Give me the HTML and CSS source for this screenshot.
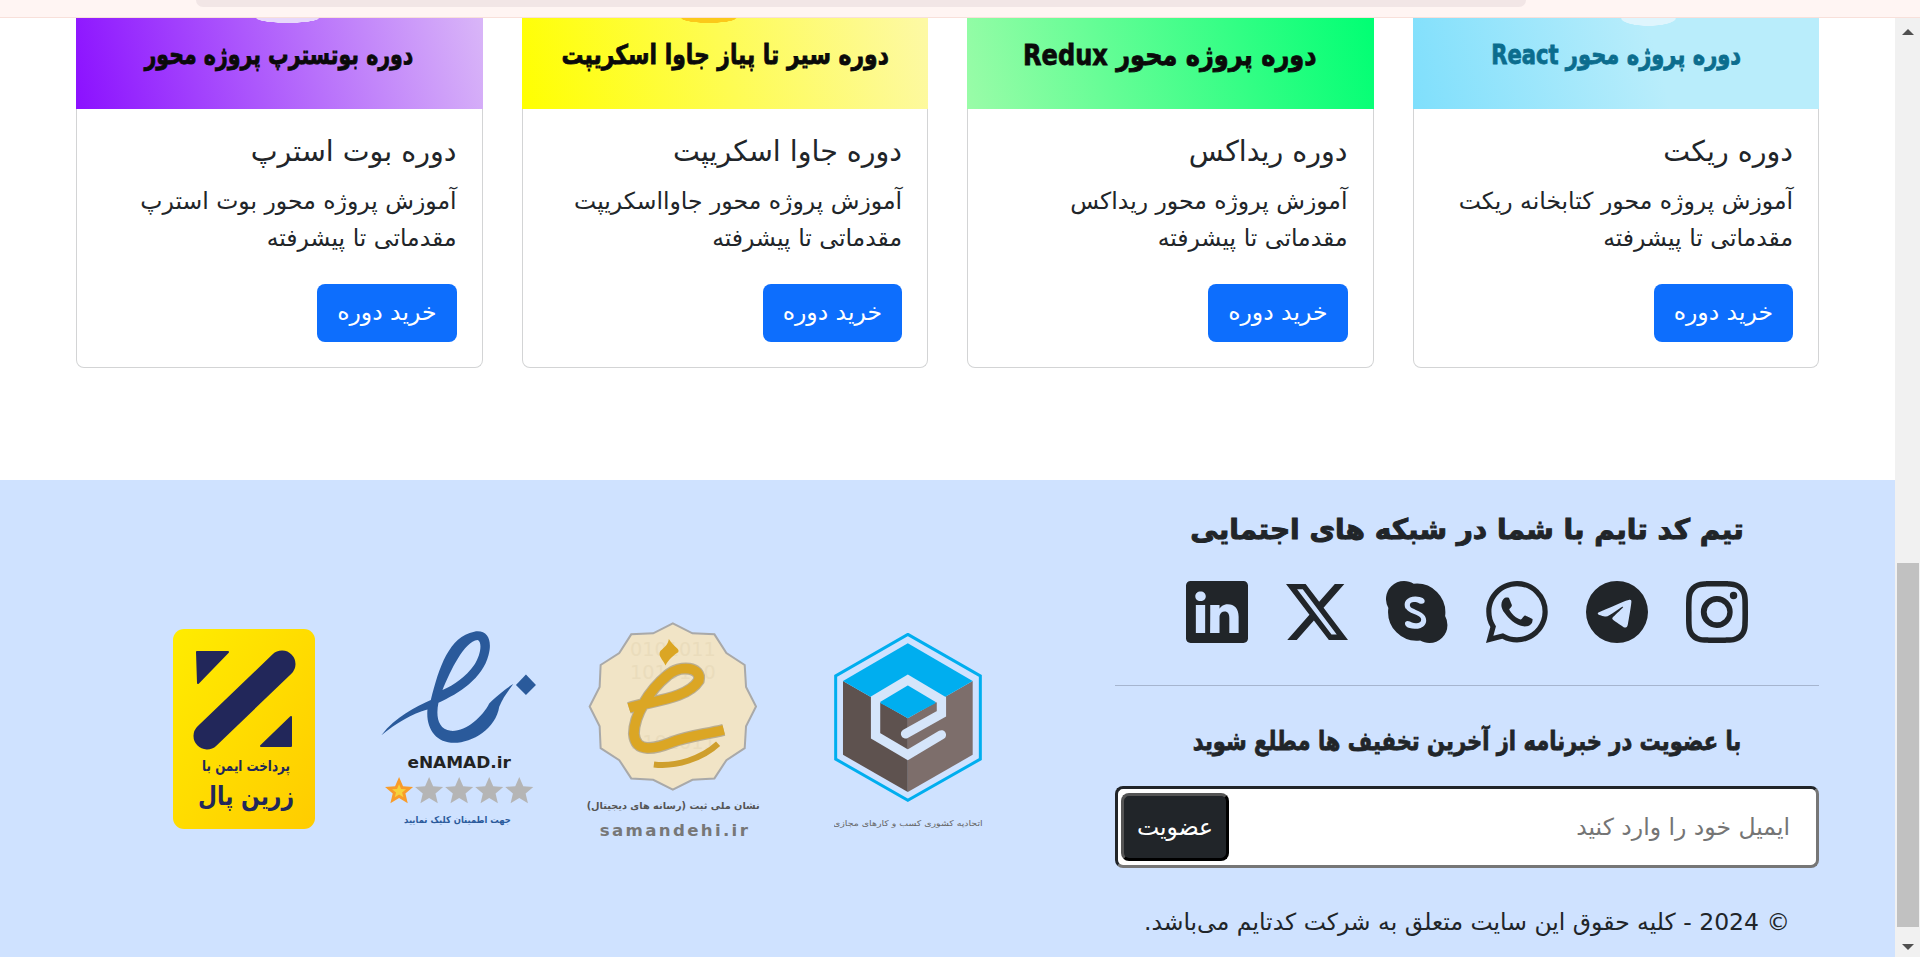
FILE: index.html
```html
<!DOCTYPE html>
<html lang="fa" dir="rtl">
<head>
    <meta charset="UTF-8">
    <meta name="viewport" content="width=device-width, initial-scale=1.0">
    <title>کدتایم</title>
    <link rel="stylesheet" href="styles.css">
</head>
<body>
    <div class="top-strip"><div class="top-pill"></div></div>

    <div class="viewport" dir="ltr">
        <main class="page" dir="rtl">
            <section class="courses">
                <article class="card">
                    <div class="banner banner-react"><span class="banner-text banner-text-react">دوره پروژه محور React</span></div>
                    <div class="card-body">
                        <h5 class="card-title">دوره ریکت</h5>
                        <p class="card-text">آموزش پروژه محور کتابخانه ریکت مقدماتی تا پیشرفته</p>
                        <a class="btn-buy">خرید دوره</a>
                    </div>
                </article>
                <article class="card">
                    <div class="banner banner-redux"><span class="banner-text banner-text-redux">دوره پروژه محور Redux</span></div>
                    <div class="card-body">
                        <h5 class="card-title">دوره ریداکس</h5>
                        <p class="card-text">آموزش پروژه محور ریداکس مقدماتی تا پیشرفته</p>
                        <a class="btn-buy">خرید دوره</a>
                    </div>
                </article>
                <article class="card">
                    <div class="banner banner-js"><span class="banner-text banner-text-js">دوره سیر تا پیاز جاوا اسکریپت</span></div>
                    <div class="card-body">
                        <h5 class="card-title">دوره جاوا اسکریپت</h5>
                        <p class="card-text">آموزش پروژه محور جاوااسکریپت مقدماتی تا پیشرفته</p>
                        <a class="btn-buy">خرید دوره</a>
                    </div>
                </article>
                <article class="card">
                    <div class="banner banner-bootstrap"><span class="banner-text banner-text-bootstrap">دوره بوتسترپ پروژه محور</span></div>
                    <div class="card-body">
                        <h5 class="card-title">دوره بوت استرپ</h5>
                        <p class="card-text">آموزش پروژه محور بوت استرپ مقدماتی تا پیشرفته</p>
                        <a class="btn-buy">خرید دوره</a>
                    </div>
                </article>
            </section>

            <footer class="footer">
                <div class="footer-main">
                    <h4 class="social-title">تیم کد تایم با شما در شبکه های اجتمایی</h4>
                    <div class="social-icons">
                        <svg class="social-icon" viewBox="0 0 16 16"><path d="M8 0C5.829 0 5.556.01 4.703.048 3.85.088 3.269.222 2.76.42a3.9 3.9 0 0 0-1.417.923A3.9 3.9 0 0 0 .42 2.76C.222 3.268.087 3.85.048 4.7.01 5.555 0 5.827 0 8.001c0 2.172.01 2.444.048 3.297.04.852.174 1.433.372 1.942.205.526.478.972.923 1.417.444.445.89.719 1.416.923.51.198 1.09.333 1.942.372C5.555 15.99 5.827 16 8 16s2.444-.01 3.298-.048c.851-.04 1.434-.174 1.943-.372a3.9 3.9 0 0 0 1.416-.923c.445-.445.718-.891.923-1.417.197-.509.332-1.09.372-1.942C15.99 10.445 16 10.173 16 8s-.01-2.445-.048-3.299c-.04-.851-.175-1.433-.372-1.941a3.9 3.9 0 0 0-.923-1.417A3.9 3.9 0 0 0 13.24.42c-.51-.198-1.092-.333-1.943-.372C10.443.01 10.172 0 7.998 0zm-.717 1.442h.718c2.136 0 2.389.007 3.232.046.78.035 1.204.166 1.486.275.373.145.64.319.92.599s.453.546.598.92c.11.281.24.705.275 1.485.039.843.047 1.096.047 3.231s-.008 2.389-.047 3.232c-.035.78-.166 1.203-.275 1.485a2.5 2.5 0 0 1-.599.919c-.28.28-.546.453-.92.598-.28.11-.704.24-1.485.276-.843.038-1.096.047-3.232.047s-2.39-.009-3.233-.047c-.78-.036-1.203-.166-1.485-.276a2.5 2.5 0 0 1-.92-.598 2.5 2.5 0 0 1-.6-.92c-.109-.281-.24-.705-.275-1.485-.038-.843-.046-1.096-.046-3.233s.008-2.388.046-3.231c.036-.78.166-1.204.276-1.486.145-.373.319-.64.599-.92s.546-.453.92-.598c.282-.11.705-.24 1.485-.276.738-.034 1.024-.044 2.515-.045zm4.988 1.328a.96.96 0 1 0 0 1.92.96.96 0 0 0 0-1.92m-4.27 1.122a4.109 4.109 0 1 0 0 8.217 4.109 4.109 0 0 0 0-8.217m0 1.441a2.667 2.667 0 1 1 0 5.334 2.667 2.667 0 0 1 0-5.334"/></svg>
                        <svg class="social-icon" viewBox="0 0 16 16"><path d="M16 8A8 8 0 1 1 0 8a8 8 0 0 1 16 0M8.287 5.906q-1.168.486-4.666 2.01-.567.225-.595.442c-.03.243.275.339.69.47l.175.055c.408.133.958.288 1.243.294q.39.01.868-.32 3.269-2.206 3.374-2.23c.05-.012.12-.026.166.016s.042.12.037.141c-.03.129-1.227 1.241-1.846 1.817-.193.18-.33.307-.358.336a8 8 0 0 1-.188.186c-.38.366-.664.64.015 1.088.327.216.589.393.85.571.284.194.568.387.936.629q.14.092.27.187c.331.236.63.448.997.414.214-.02.435-.22.547-.82.265-1.417.786-4.486.906-5.751a1.4 1.4 0 0 0-.013-.315.34.34 0 0 0-.114-.217.53.53 0 0 0-.31-.093c-.3.005-.763.166-2.984 1.09"/></svg>
                        <svg class="social-icon" viewBox="0 0 16 16"><path d="M13.601 2.326A7.85 7.85 0 0 0 7.994 0C3.627 0 .068 3.558.064 7.926c0 1.399.366 2.76 1.057 3.965L0 16l4.204-1.102a7.9 7.9 0 0 0 3.79.965h.004c4.368 0 7.926-3.558 7.93-7.93A7.9 7.9 0 0 0 13.6 2.326zM7.994 14.521a6.6 6.6 0 0 1-3.356-.92l-.24-.144-2.494.654.666-2.433-.156-.251a6.56 6.56 0 0 1-1.007-3.505c0-3.626 2.957-6.584 6.591-6.584a6.56 6.56 0 0 1 4.66 1.931 6.56 6.56 0 0 1 1.928 4.66c-.004 3.639-2.961 6.592-6.592 6.592m3.615-4.934c-.197-.099-1.17-.578-1.353-.646-.182-.065-.315-.099-.445.099-.133.197-.513.646-.627.775-.114.133-.232.148-.43.05-.197-.1-.836-.308-1.592-.985-.59-.525-.985-1.175-1.103-1.372-.114-.198-.011-.304.088-.403.087-.088.197-.232.296-.346.1-.114.133-.198.198-.33.065-.134.034-.248-.015-.347-.05-.099-.445-1.076-.612-1.47-.16-.389-.323-.335-.445-.34-.114-.007-.247-.007-.38-.007a.73.73 0 0 0-.529.247c-.182.198-.691.677-.691 1.654s.71 1.916.81 2.049c.098.133 1.394 2.132 3.383 2.992.47.205.84.326 1.129.418.475.152.904.129 1.246.08.38-.058 1.171-.48 1.338-.943.164-.464.164-.86.114-.943-.049-.084-.182-.133-.38-.232"/></svg>
                        <svg class="social-icon" viewBox="0 0 16 16"><path d="M4.671 0c.88 0 1.733.247 2.468.702a7.42 7.42 0 0 1 6.02 2.118 7.37 7.37 0 0 1 2.167 5.215q0 .517-.072 1.026a4.66 4.66 0 0 1 .6 2.281 4.64 4.64 0 0 1-1.37 3.294A4.67 4.67 0 0 1 11.18 16c-.84 0-1.658-.226-2.37-.644a7.42 7.42 0 0 1-6.114-2.107A7.37 7.37 0 0 1 .529 8.035q0-.545.08-1.081a4.644 4.644 0 0 1 .76-5.59A4.68 4.68 0 0 1 4.67 0zm.447 7.01c.18.309.43.572.729.769a7 7 0 0 0 1.257.653q.737.308 1.145.523c.229.112.437.264.615.448.135.142.21.331.21.528a.87.87 0 0 1-.335.723c-.291.196-.64.289-.99.264a2.6 2.6 0 0 1-1.048-.206 11 11 0 0 1-.532-.253 1.3 1.3 0 0 0-.587-.15.72.72 0 0 0-.501.176.65.65 0 0 0-.195.498c.01.258.126.499.32.669.248.23.55.398.877.49.441.134.9.199 1.36.192.51.009 1.02-.071 1.504-.236.408-.143.766-.396 1.035-.733.255-.335.39-.747.38-1.168a2.1 2.1 0 0 0-.331-1.192 2.8 2.8 0 0 0-.892-.836 10 10 0 0 0-1.435-.692 11 11 0 0 1-.923-.421 1.6 1.6 0 0 1-.447-.35.75.75 0 0 1-.18-.501.7.7 0 0 1 .3-.566c.232-.162.51-.24.792-.224.239-.003.476.03.704.1.231.08.46.167.686.263.186.07.383.11.582.119a.76.76 0 0 0 .57-.197.69.69 0 0 0 .191-.5.72.72 0 0 0-.12-.396 1.4 1.4 0 0 0-.397-.39 2.4 2.4 0 0 0-.753-.306 4.6 4.6 0 0 0-1.16-.123 3.8 3.8 0 0 0-1.387.241 2.2 2.2 0 0 0-.976.736c-.246.332-.375.735-.366 1.148-.015.4.08.794.275 1.143z"/></svg>
                        <svg class="social-icon" viewBox="0 0 16 16"><path d="M12.6.75h2.454l-5.36 6.142L16 15.25h-4.937l-3.867-5.07-4.425 5.07H.316l5.733-6.57L0 .75h5.063l3.495 4.633L12.601.75Zm-.86 13.028h1.36L4.323 2.145H2.865z"/></svg>
                        <svg class="social-icon" viewBox="0 0 16 16"><path d="M0 1.146C0 .513.526 0 1.175 0h13.65C15.474 0 16 .513 16 1.146v13.708c0 .633-.526 1.146-1.175 1.146H1.175C.526 16 0 15.487 0 14.854zm4.943 12.248V6.169H2.542v7.225zm-1.2-8.212c.837 0 1.358-.554 1.358-1.248-.015-.709-.52-1.248-1.342-1.248S2.4 3.226 2.4 3.934c0 .694.521 1.248 1.327 1.248zm4.908 8.212V9.359c0-.216.016-.432.08-.586.173-.431.568-.878 1.232-.878.869 0 1.216.662 1.216 1.634v3.865h2.401V9.25c0-2.22-1.184-3.252-2.764-3.252-1.274 0-1.845.7-2.165 1.193v.025h-.016l.016-.025V6.169h-2.4c.03.678 0 7.225 0 7.225z"/></svg>
                    </div>
                    <hr class="divider">
                    <h5 class="news-title">با عضویت در خبرنامه از آخرین تخفیف ها مطلع شوید</h5>
                    <form class="news-form">
                        <input class="news-input" type="email" placeholder="ایمیل خود را وارد کنید">
                        <button class="news-btn" type="button">عضویت</button>
                    </form>
                    <p class="copyright">© 2024 - کلیه حقوق این سایت متعلق به شرکت کدتایم می‌باشد.</p>
                </div>

                <div class="badges">
                    <!-- logos are drawn in the coordinates of a 3x crop, so viewBox / 3 = size on page -->
                    <svg class="badge badge-union" viewBox="825 100 448 590">
                        <polygon points="1047,103 1265,228 1265,478 1047,602 830,478 830,228" fill="none" stroke="#00aeef" stroke-width="9"/>
                        <polygon points="852,243 1047,355 1047,577 852,465" fill="#5e524f"/>
                        <polygon points="1242,243 1047,355 1047,577 1242,465" fill="#7d6e6b"/>
                        <polygon points="852,243 1047,130 1242,243 1047,355" fill="#00aeef"/>
                        <polygon points="965,310 1047,260 1130,310 1047,352" fill="#00aeef"/>
                        <path d="M1040 402 L1148 342 L1148 300 L1047 240 L950 298 L950 408 L1047 465 L1148 405" fill="none" stroke="#d5e5fa" stroke-width="28" stroke-linecap="round"/>
                        <text class="badge-text" x="1047" y="680" text-anchor="middle" font-size="24" fill="#666" textLength="450" lengthAdjust="spacingAndGlyphs">اتحادیه کشوری کسب و کارهای مجازی</text>
                    </svg>

                    <svg class="badge badge-samandehi" viewBox="75 65 535 650">
                        <polygon points="342,68 401,98 467,101 503,157 558,193 562,259 592,318 562,377 558,443 503,479 467,534 401,538 342,568 283,538 217,534 181,479 125,443 122,377 92,318 122,259 125,193 181,157 217,101 283,98" fill="#f1e4c6" stroke="#a9a9a9" stroke-width="6"/>
                        <text class="badge-binary" direction="ltr" x="342" y="165" text-anchor="middle">0101011</text>
                        <text class="badge-binary" direction="ltr" x="342" y="235" text-anchor="middle">1010110</text>
                        <text class="badge-binary" direction="ltr" x="342" y="445" text-anchor="middle">1101011</text>
                        <path d="M330 115 C345 140 365 145 358 155 C335 170 325 185 320 195 C312 175 295 165 305 150 C318 140 328 130 330 115Z" fill="#dba624"/>
                        <path d="M210 322 C280 300 385 295 420 240 C430 200 365 190 325 225 C270 270 225 345 225 400 C230 460 290 445 340 425 C390 405 440 402 495 388" fill="none" stroke="#b9ad92" stroke-width="36"/>
                        <path d="M210 322 C280 300 385 295 420 240 C430 200 365 190 325 225 C270 270 225 345 225 400 C230 460 290 445 340 425 C390 405 440 402 495 388" fill="none" stroke="#dba624" stroke-width="29"/>
                        <path d="M285 492 C350 500 430 475 478 430" fill="none" stroke="#cf9f2c" stroke-width="18"/>
                        <text class="badge-text badge-bold" x="343" y="625" text-anchor="middle" font-size="29" fill="#555" textLength="520" lengthAdjust="spacingAndGlyphs">نشان ملی ثبت (رسانه های دیجیتال)</text>
                        <text class="badge-text badge-bold" direction="ltr" x="345" y="706" text-anchor="middle" font-size="50" fill="#777" textLength="445" lengthAdjust="spacing">samandehi.ir</text>
                    </svg>

                    <svg class="badge badge-enamad" viewBox="690 90 470 590">
                        <path fill-rule="evenodd" fill="#2a5a9b" d="M697 405 C740 350 800 320 845 300 C870 200 900 110 975 95 C1015 88 1030 120 1018 165 C1000 235 930 280 868 308 C860 345 865 388 905 392 C950 395 1000 350 1020 310 C1040 290 1070 265 1092 252 C1075 275 1060 295 1050 320 C1040 385 970 428 915 428 C860 428 830 385 835 328 C790 340 740 370 697 405Z M880 270 C905 210 945 125 985 120 C1000 125 995 165 975 195 C950 230 915 255 880 270Z"/>
                        <polygon points="1130,223 1160,255 1130,285 1100,255" fill="#2a5a9b"/>
                        <text class="badge-text badge-bold" direction="ltr" x="930" y="502" text-anchor="middle" font-size="50" fill="#222" textLength="310" lengthAdjust="spacingAndGlyphs">eNAMAD.ir</text>
                        <polygon points="750,530 762,558 792,560 769,580 776,609 750,593 724,609 731,580 708,560 738,558" fill="#f89c2b"/>
                        <polygon points="750,552 756,566 771,567 759,577 763,591 750,583 737,591 741,577 729,567 744,566" fill="#f6d23c"/>
                        <polygon points="840,530 852,558 882,560 859,580 866,609 840,593 814,609 821,580 798,560 828,558" fill="#b5b5b5"/>
                        <polygon points="930,530 942,558 972,560 949,580 956,609 930,593 904,609 911,580 888,560 918,558" fill="#b5b5b5"/>
                        <polygon points="1020,530 1032,558 1062,560 1039,580 1046,609 1020,593 994,609 1001,580 978,560 1008,558" fill="#b5b5b5"/>
                        <polygon points="1110,530 1122,558 1152,560 1129,580 1136,609 1110,593 1084,609 1091,580 1068,560 1098,558" fill="#b5b5b5"/>
                        <text class="badge-text badge-bold" x="925" y="668" text-anchor="middle" font-size="28" fill="#2a5a9b" textLength="320" lengthAdjust="spacingAndGlyphs">جهت اطمینان کلیک نمایید</text>
                    </svg>

                    <svg class="badge badge-zarin" viewBox="0 0 142 200">
                        <defs>
                            <linearGradient id="zarinFill" x1="0" y1="0" x2="1" y2="1">
                                <stop offset="0" stop-color="#ffec00"/>
                                <stop offset="1" stop-color="#ffcc00"/>
                            </linearGradient>
                        </defs>
                        <rect width="142" height="200" rx="11" fill="url(#zarinFill)"/>
                        <polygon points="24,23 55,23 25,54" fill="#22275a" stroke="#22275a" stroke-width="2" stroke-linejoin="round"/>
                        <line x1="109" y1="35" x2="34" y2="107" stroke="#22275a" stroke-width="27" stroke-linecap="round"/>
                        <polygon points="118,88 118,117 88,117" fill="#22275a" stroke="#22275a" stroke-width="2" stroke-linejoin="round"/>
                        <text class="badge-text badge-bold" x="73" y="142" text-anchor="middle" font-size="15" fill="#22275a" textLength="88" lengthAdjust="spacingAndGlyphs">پرداخت ایمن با</text>
                        <text class="badge-text badge-bold" x="73" y="176" text-anchor="middle" font-size="26" fill="#22275a" textLength="96" lengthAdjust="spacingAndGlyphs">زرین پال</text>
                    </svg>
                </div>
            </footer>
        </main>

        <div class="scrollbar">
            <span class="arrow-up"></span>
            <div class="thumb"></div>
            <span class="arrow-down"></span>
        </div>
    </div>
</body>
</html>
```

FILE: styles.css
```css
* {
    box-sizing: border-box;
}
body {
    margin: 0;
    height: 957px;
    overflow: hidden;
    font-family: "DejaVu Sans", sans-serif;
    color: #212529;
    background: #fff;
}
.top-strip {
    height: 18px;
    padding: 0 394px 0 196px;
    background: #fff5f3;
    border-bottom: 1px solid #f8e0da;
}
.top-pill {
    height: 7px;
    background: #f2e6e6;
    border-radius: 0 0 12px 12px;
}
.viewport {
    display: flex;
    height: 939px;
}
.page {
    flex: 1;
    min-width: 0;
    display: flex;
    flex-direction: column;
}

/* courses */
.courses {
    display: grid;
    grid-template-columns: repeat(4, 1fr);
    gap: 39px;
    padding: 0 76px 112px;
}
.card {
    background: #fff;
    border: 1px solid #d3d4d5;
    border-top: 0;
    border-radius: 0 0 8px 8px;
}
.banner {
    display: flex;
    align-items: center;
    justify-content: center;
    height: 91px;
    margin: 0 -1px;
    padding-bottom: 18px;
}
/* the banners are a narrow display face, so the text is squeezed sideways */
.banner-text {
    font-weight: 700;
    color: #0a0a0a;
    white-space: nowrap;
    -webkit-text-stroke: 0.8px currentColor;
}
.banner-text-react {
    font-size: 27px;
    color: #0b6d8e;
    transform: scaleX(0.78);
}
.banner-text-redux {
    font-size: 29px;
    transform: scaleX(0.83);
}
.banner-text-js {
    font-size: 27px;
    transform: scaleX(0.81);
}
.banner-text-bootstrap {
    font-size: 27px;
    transform: scaleX(0.76);
}
.banner-react {
    background: radial-gradient(ellipse 28px 8px at 58% 0, #dff5fd 95%, transparent), linear-gradient(75deg, #7fdffc, #b9edfb 60%);
}
.banner-redux {
    background: linear-gradient(75deg, #9afca8, #00ff73);
}
.banner-js {
    background: radial-gradient(ellipse 28px 5px at 46% 0, #fbc91a 95%, transparent), linear-gradient(75deg, #ffff00, #fdf9a6);
}
.banner-bootstrap {
    background: radial-gradient(ellipse 32px 5px at 52% 0, #e8d8fb 95%, transparent), linear-gradient(75deg, #8b10ff, #d9b6f8);
}
.card-body {
    padding: 22px 25px 25px;
}
.card-title {
    margin: 0 0 10px;
    font-size: 28.5px;
    font-weight: 400;
    line-height: 42px;
}
.card-text {
    margin: 0 0 27px;
    padding-left: 16px;
    font-size: 23.5px;
    line-height: 37px;
}
.btn-buy {
    display: inline-block;
    height: 58px;
    padding: 0 20px;
    line-height: 56px;
    font-size: 23.5px;
    color: #fff;
    background: #0d6efd;
    border-radius: 8px;
}

/* footer */
.footer {
    flex: 1;
    display: flex;
    align-items: flex-start;
    padding: 26px 76px 0;
    background: #cfe2ff;
}
.footer-main {
    flex: 0 0 704px;
}
.social-title {
    margin: 0;
    font-size: 28px;
    font-weight: 700;
    line-height: 48px;
    text-align: center;
    -webkit-text-stroke: 1px currentColor;
}
.social-icons {
    display: flex;
    justify-content: center;
    gap: 38px;
    margin-top: 27px;
}
.social-icon {
    width: 62px;
    height: 62px;
    fill: #212529;
}
.divider {
    height: 1px;
    margin: 42px 0 35px;
    border: 0;
    background: #a6b5cf;
}
.news-title {
    margin: 0;
    font-size: 26px;
    font-weight: 700;
    line-height: 40px;
    text-align: center;
    transform: scaleX(0.81);
    -webkit-text-stroke: 0.8px currentColor;
}
.news-form {
    display: flex;
    align-items: center;
    height: 82px;
    margin-top: 25px;
    padding: 4px 3px;
    background: #fff;
    border: 3px solid;
    border-color: #212529 #767676 #767676 #212529;
    border-radius: 8px;
}
.news-input {
    flex: 1;
    min-width: 0;
    height: 68px;
    padding: 0 23px 0 12px;
    border: 0;
    outline: 0;
    background: transparent;
    font: 23.5px "DejaVu Sans", sans-serif;
    color: #212529;
}
.news-input::placeholder {
    color: #757575;
}
.news-btn {
    width: 108px;
    height: 68px;
    padding: 0;
    border: 3px solid;
    border-color: #555 #000 #000 #555;
    border-radius: 8px;
    background: #212529;
    color: #fff;
    font: 23.5px "DejaVu Sans", sans-serif;
}
.copyright {
    margin: 35px 0 0;
    padding-right: 29px;
    font-size: 23.5px;
    line-height: 38px;
}

/* badges */
.badges {
    display: flex;
    align-items: flex-start;
    margin-top: 116px;
    margin-right: 132px;
}
.badge {
    display: block;
    flex: none;
}
.badge-text {
    font-family: "DejaVu Sans", sans-serif;
}
.badge-bold {
    font-weight: 700;
}
.badge-binary {
    font-family: "DejaVu Sans", sans-serif;
    font-size: 58px;
    fill: #eadcbc;
}
.badge-union {
    width: 149px;
    height: 197px;
    margin-top: 11px;
    margin-left: 72px;
}
.badge-samandehi {
    width: 178px;
    height: 217px;
    margin-left: 48px;
}
.badge-enamad {
    width: 157px;
    height: 197px;
    margin-top: 8px;
    margin-left: 64px;
}
.badge-zarin {
    width: 142px;
    height: 200px;
    margin-top: 7px;
}

/* window scrollbar */
.scrollbar {
    position: relative;
    flex: 0 0 25px;
    background: #f1f1f1;
}
.thumb {
    position: absolute;
    top: 545px;
    bottom: 30px;
    left: 2px;
    right: 1px;
    background: #c1c1c1;
}
.arrow-up,
.arrow-down {
    position: absolute;
    left: 7px;
    width: 0;
    height: 0;
    border-left: 6px solid transparent;
    border-right: 6px solid transparent;
}
.arrow-up {
    top: 11px;
    border-bottom: 6px solid #505050;
}
.arrow-down {
    bottom: 7px;
    border-top: 6px solid #505050;
}
```
